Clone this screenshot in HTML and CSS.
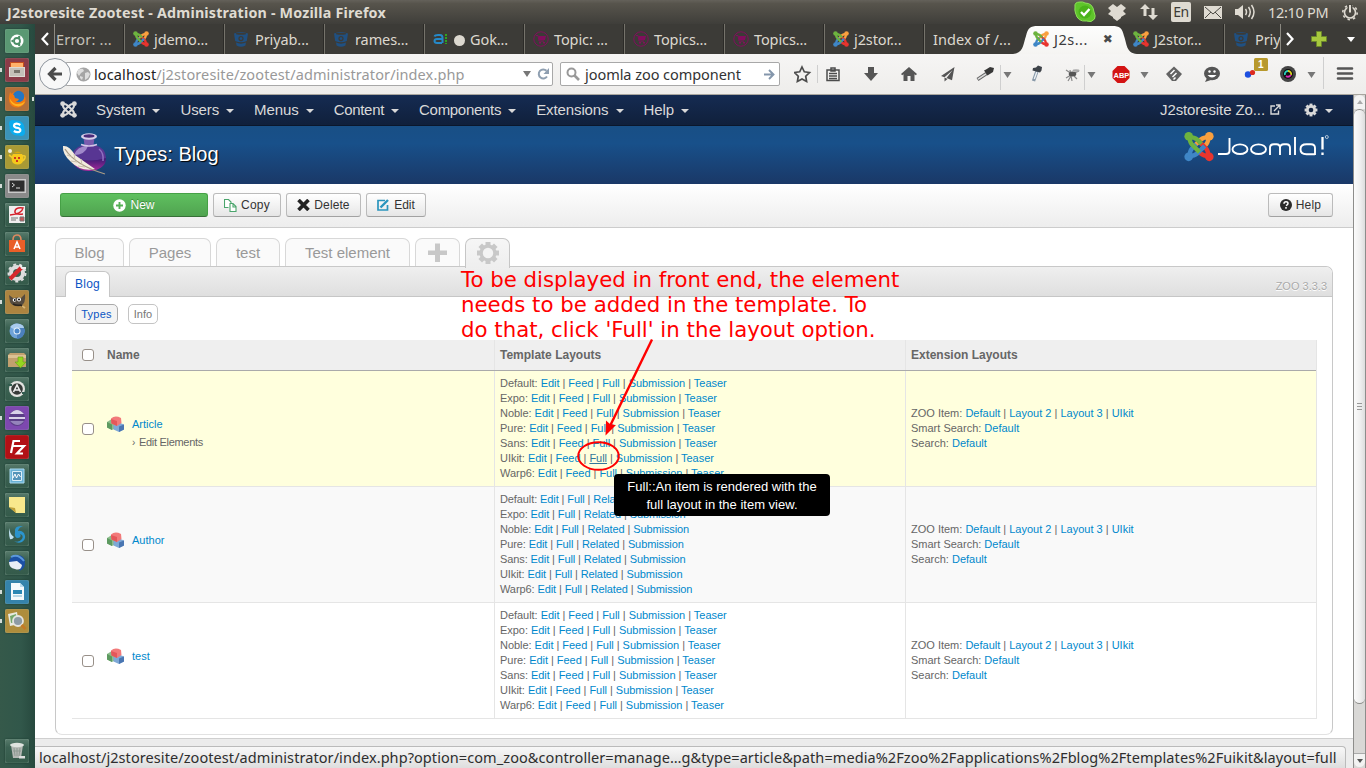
FILE: index.html
```html
<!DOCTYPE html>
<html lang="en">
<head>
<meta charset="utf-8">
<title>J2storesite Zootest - Administration</title>
<link rel="stylesheet" href="styles.css">
</head>
<body>
<svg class="defs" width="0" height="0">
  <defs>
    <linearGradient id="ink" x1="0" y1="0" x2="0" y2="1"><stop offset="0" stop-color="#7a5bb0"/><stop offset=".5" stop-color="#3f1c75"/><stop offset="1" stop-color="#a82a9b"/></linearGradient>
    <linearGradient id="tabfill" x1="0" y1="0" x2="0" y2="1"><stop offset="0" stop-color="#fdfdfc"/><stop offset="1" stop-color="#f5f4f2"/></linearGradient>
    <g id="arm"><circle cx="5" cy="5" r="4.6"/><path d="M18.5 13 L14 8.500 Q11 6 6 6 Q6 11 8.500 14 L16.500 22" fill="none" stroke-width="4.600"/></g>
    <symbol id="joomla" viewBox="0 0 32 32">
      <use href="#arm" fill="#f9a03f" stroke="#f9a03f" stroke-width="0" transform="rotate(90 16 16)"/>
      <use href="#arm" fill="#e8352e" stroke="#e8352e" stroke-width="0" transform="rotate(180 16 16)"/>
      <use href="#arm" fill="#3f86c6" stroke="#3f86c6" stroke-width="0" transform="rotate(270 16 16)"/>
      <use href="#arm" fill="#6db33f" stroke="#6db33f" stroke-width="0"/>
    </symbol>
    <symbol id="joomla-mono" viewBox="0 0 32 32">
      <g fill="#d9d9d9" stroke="#d9d9d9" stroke-width="0"><circle cx="5" cy="5" r="4.600"/><circle cx="27" cy="5" r="4.600"/><circle cx="5" cy="27" r="4.600"/><circle cx="27" cy="27" r="4.600"/></g>
      <path d="M5 5Q12 5 16 10L22 16M27 5Q27 12 22 16L16 22M27 27Q20 27 16 22L10 16M5 27Q5 20 10 16L16 10M5 5Q5 12 10 16M27 5Q20 5 16 10M27 27Q27 20 22 16M5 27Q12 27 16 22" fill="none" stroke="#d9d9d9" stroke-width="3.800"/>
    </symbol>
    <symbol id="bucket" viewBox="0 0 16 16"><path d="M1 2.500 Q8 -.5 15 2.500 L13.800 10 Q8 12.500 2.200 10Z M3 11.500 Q8 13.800 13 11.500 L12.400 14.500 Q8 17 3.600 14.500Z" fill="#205081"/><ellipse cx="8" cy="2.800" rx="5.200" ry="1" fill="#3c3b37"/><circle cx="8" cy="7.600" r="2.600" fill="#3c3b37"/><circle cx="8" cy="7.600" r="1.300" fill="#205081"/></symbol>
    <symbol id="cart" viewBox="0 0 16 16"><circle cx="8" cy="8" r="7.200" fill="none" stroke="#820e5d"/><path d="M3 4.500h2l1 5.500h5" fill="none" stroke="#820e5d" stroke-width="1"/><path d="M5.500 5h7.500l-1 4H6zM6 11h2v1.500h-2zM10 11h2v1.500h-2z" fill="#820e5d"/></symbol>
    <symbol id="blocks" viewBox="0 0 17 16"><path d="M0 6l4-2.500 5 2.500v6l-4 2-5-2.500z" fill="#8bbd8b"/><path d="M0 6l5 2.500v5.500l-5-2.500z" fill="#5d9a60"/><path d="M6.500 9l5.500-2.500 5 2v5l-5 2.500-5.500-2.500z" fill="#7ea8d6"/><path d="M12 10.500l5-2v5l-5 2.500z" fill="#4a76b2"/><path d="M4 2.500Q8-1 14 2l.5 5-4.500 3-5.500-2.500z" fill="#f27a7a"/><path d="M4 3l6 2v5l-5.500-2.500z" fill="#e4575a"/></symbol>
    <symbol id="gear" viewBox="-12 -12 24 24"><g fill="currentColor"><path d="M-2.500-11h5v22h-5z"/><path d="M-2.500-11h5v22h-5z" transform="rotate(45)"/><path d="M-2.500-11h5v22h-5z" transform="rotate(90)"/><path d="M-2.500-11h5v22h-5z" transform="rotate(135)"/><circle r="8.500"/></g></symbol>
  </defs>
</svg>

<header class="panel">
  <div class="panel-title">J2storesite Zootest - Administration - Mozilla Firefox</div>
  <div class="tray">
    <svg width="22" height="22" viewBox="0 0 22 22"><path d="M1 6Q0 1 6 1q3-.5 5 1 8 0 9 9 2 4 .500 7-3 4-8 2-9 1-11-8-1-3-.5-6z" fill="#5fc52b" stroke="#8ee05a"/><circle cx="11" cy="11" r="6.500" fill="#4ab31a"/><path d="M7 11l3 3 5.500-6" fill="none" stroke="#fff" stroke-width="2.400"/></svg>
    <svg class="m1" width="18" height="17" viewBox="0 0 18 17"><path d="M5 0l4 3 4-3 5 4-3 3 3 3-5 3v1l-4 3-4-3v-1l-5-3 3-3-3-3z" fill="#dfdbd2"/></svg>
    <svg class="m2" width="18" height="16" viewBox="0 0 18 16"><path d="M5 0l5 5H6.500v7h-3V5H0zM13 16l5-5h-3.500V4h-3v7H8z" fill="#dfdbd2"/></svg>
    <span class="lang">En</span>
    <svg class="m3" width="18" height="13" viewBox="0 0 18 13"><path d="M0 0h18v13H0z" fill="#dfdbd2"/><path d="M1 1l8 7 8-7M1 12l6-6M17 12l-6-6" fill="none" stroke="#4a4943"/></svg>
    <svg class="m4" width="20" height="16" viewBox="0 0 20 16"><path d="M0 5h3l5-4v14l-5-4H0z" fill="#dfdbd2"/><path d="M10.500 5q2 3 0 6M13.500 3q3.500 5 0 10M16.500 1q5 7 0 14" fill="none" stroke="#dfdbd2" stroke-width="1.500"/></svg>
    <span class="clock">12:10 PM</span>
    <svg width="16" height="17" viewBox="-8 -8.500 16 17"><circle r="5.500" fill="none" stroke="#dfdbd2" stroke-width="1.600"/><circle r="7.200" fill="none" stroke="#dfdbd2" stroke-width="1.600" stroke-dasharray="2.400 3.250"/><path d="M-2.500-8.500h5V-3h-5z" fill="#4b4942"/><path d="M0-7.500V0" stroke="#dfdbd2" stroke-width="2"/></svg>
  </div>
</header>

<div class="desktop">
<aside class="launcher">
  <div class="tile ubuntu"><svg viewBox="0 0 24 24"><circle cx="12" cy="12" r="6.500" fill="#fff"/><circle cx="12" cy="12" r="3" fill="none" stroke="#4d8f68" stroke-width="1.800"/><g fill="#4d8f68"><circle cx="7.500" cy="12" r="1.200"/><circle cx="14.200" cy="8" r="1.200"/><circle cx="14.200" cy="16" r="1.200"/></g></svg></div>
  <div class="tile files on"><svg viewBox="0 0 24 24"><path d="M5 4h14v6H5z" fill="#c74e1d"/><path d="M6 5h12v4H6z" fill="#ffb169"/><path d="M4 9h16v10H4z" fill="#ddd9d2"/><path d="M5 10h14v8H5z" fill="#c4c0b8"/><path d="M9 12h6v3H9z" fill="#77736b"/></svg></div>
  <div class="tile fox on cur"><svg viewBox="0 0 24 24"><circle cx="12.500" cy="12" r="7.800" fill="#f27a12"/><circle cx="13.500" cy="9.500" r="5.800" fill="#2476c4"/><path d="M5 5q2 3 4 3l1 3 4 1q-2 4-6 2 4 5 10 1 2-2 2-6 2 7-3 10-5 3-10 0-5-4-2-14z" fill="#f27a12"/><path d="M4.500 11q1 8 9 8.500 5-1 6.500-5-4 3-9 2.500-4-1-6.500-6z" fill="#ffb321"/></svg></div>
  <div class="tile skype on"><svg viewBox="0 0 24 24"><circle cx="12" cy="12" r="7.500" fill="#0bacee"/><circle cx="8" cy="8" r="4" fill="#0bacee"/><circle cx="16" cy="16" r="4" fill="#0bacee"/><path d="M15.300 9Q12 6.700 9.500 8.300q-1.500 2.200 1.500 3.300 5 .5 4.300 3.200-2 2.700-6.500.2" fill="none" stroke="#fff" stroke-width="2.200"/></svg></div>
  <div class="tile pot on"><svg viewBox="0 0 24 24"><path d="M8 9h9q3 4 0 9-4 3-9 0-3-5 0-9z" fill="#f6c91b"/><path d="M17 11q4-1 3 2t-4 3M8 13L4 10" fill="none" stroke="#f1cb2a" stroke-width="1.600"/><path d="M9 8q4-3 7 0z" fill="#d9a90d"/><path d="M9 12h2v2H9zM13 12h2v2h-2zM11 15h2v2h-2z" fill="#d0361c"/><circle cx="5" cy="6" r="2" fill="#f4f2e0"/></svg></div>
  <div class="tile term on"><svg viewBox="0 0 24 24"><path d="M3 5h18v14H3z" fill="#c9c9c9"/><path d="M4.500 6.500h15v11h-15z" fill="#2d2d2d"/><path d="M7 9l2.500 2L7 13M11 14h4" fill="none" stroke="#ddd"/></svg></div>
  <div class="tile"><svg viewBox="0 0 24 24"><path d="M4 3h16v17H4z" fill="#eee"/><path d="M5 12q12-1 13-7-7-1-8 3t8 3" fill="none" stroke="#d5202b" stroke-width="1.500"/><path d="M6 15h7M6 17h5M15 14h4v4h-4z" stroke="#777" fill="#ca5656"/></svg></div>
  <div class="tile"><svg viewBox="0 0 24 24"><path d="M4 8h16v12H4z" fill="#e95f28"/><path d="M8 8q0-5 4-5t4 5" fill="none" stroke="#e0895f" stroke-width="1.600"/><path d="M9 17l3-7 3 7M10 15h4" fill="none" stroke="#fff" stroke-width="1.500"/></svg></div>
  <div class="tile"><svg viewBox="0 0 24 24"><circle cx="12" cy="12" r="6" fill="none" stroke="#ddd" stroke-width="4" /><circle cx="12" cy="12" r="8.500" fill="none" stroke="#ddd" stroke-width="2" stroke-dasharray="3 3"/><path d="M5 18L17 6" stroke="#d5282c" stroke-width="4"/><path d="M15 4l2 3 4 0" fill="none" stroke="#eee" stroke-width="2"/></svg></div>
  <div class="tile gimp on"><svg viewBox="0 0 24 24"><path d="M4 5l4 3q6-1 8 0l4-4q1 9-4 12-9 1-11-4z" fill="#544b3f"/><circle cx="9.500" cy="10" r="1.800" fill="#fff"/><circle cx="14" cy="9.500" r="2" fill="#fff"/><circle cx="9.800" cy="10" r=".9"/><circle cx="14" cy="9.500" r="1"/><path d="M8 14q4 2 8 1l2 2" fill="none" stroke="#29241e" stroke-width="1.500"/><path d="M17 16l3 2" stroke="#d8b46f" stroke-width="2"/></svg></div>
  <div class="tile"><svg viewBox="0 0 24 24"><circle cx="12" cy="12" r="7.500" fill="#6fa3d8"/><path d="M12 12L5 8q4-5 10-3 4 1 4 4z" fill="#a9cbee"/><path d="M12 12v8q7-1 8-8 0-2-1-3h-7z" fill="#4b80bd"/><circle cx="12" cy="12" r="3.500" fill="#e6f1fb"/><circle cx="12" cy="12" r="2.500" fill="#4c88c9"/></svg></div>
  <div class="tile"><svg viewBox="0 0 24 24"><path d="M3 7l2-2h14l2 2v12H3z" fill="#c2a06f"/><path d="M3 7h18v3H3z" fill="#dcc193"/><path d="M13 9h5v5h3l-5.500 6L10 14h3z" fill="#95d620" stroke="#619d13" stroke-width=".6"/></svg></div>
  <div class="tile"><svg viewBox="0 0 24 24"><circle cx="12" cy="12" r="8" fill="#e3e3e0"/><circle cx="12" cy="12" r="5.800" fill="#373a38"/><path d="M8.500 15l3.500-7 3.500 7M10 13h4" fill="none" stroke="#eee" stroke-width="1.600"/><path d="M3 8l4 0M17 16h4" stroke="#315c4e" stroke-width="2"/></svg></div>
  <div class="tile eclipse on"><svg viewBox="0 0 24 24"><circle cx="12" cy="12" r="8" fill="#5b3e87"/><path d="M5 8q7-8 14 0zM4 11h16v2H4z" fill="#d9d0e8"/><path d="M5 15h14q-6 8-14 0z" fill="#9583bb"/></svg></div>
  <div class="tile fz"><svg viewBox="0 0 24 24"><path d="M6 18L8.500 6H15M7.500 11h5M12.500 11H19l-7 7.500h6" fill="none" stroke="#fff" stroke-width="2.200"/></svg></div>
  <div class="tile"><svg viewBox="0 0 24 24"><path d="M5 5h14v14H5z" fill="#69b1d5" stroke="#a9d9ef"/><path d="M7.500 7.500h9v9h-9z" fill="#5594b9" stroke="#dceff8"/><path d="M8 14l2-4 1.500 4 2-4 2 3" fill="none" stroke="#fff"/></svg></div>
  <div class="tile"><svg viewBox="0 0 24 24"><path d="M4 4h16v16h-9l-7-6z" fill="#f8e88c"/><path d="M4 14l6 1 1 5z" fill="#bd9f38"/></svg></div>
  <div class="tile"><svg viewBox="0 0 24 24"><path d="M5 6q-1 6 4 9-2 3-4 2-2-6 0-11z" fill="#bfe0ef"/><path d="M18 4q-9-1-8 6-1 6 3 6 4-1 2-4 4 1 2 5-3 4-8 2 4 3 8 1 5-3 2-9-3-3-6-2 1-4 5-5z" fill="#2b94cc"/></svg></div>
  <div class="tile"><svg viewBox="0 0 24 24"><path d="M4 12q0-7 8-8 8 0 8 8 0 6-6 8 3-5-2-8z" fill="#1b50a5"/><path d="M6 6q7-4 13 4" fill="none" stroke="#5b98db" stroke-width="2"/><path d="M4 11l8-1 5 4q-1 6-7 4-6-1-6-7z" fill="#e8eef5"/></svg></div>
  <div class="tile writer on"><svg viewBox="0 0 24 24"><path d="M6 3h9l4 4v13H6z" fill="#f6fafc"/><path d="M15 3v4h4z" fill="#b9dcef"/><path d="M8 10h9v4H8z" fill="#2b87b4"/><path d="M8 16h9" stroke="#79b4d1"/></svg></div>
  <div class="tile viewer on"><svg viewBox="0 0 24 24"><path d="M3 5l9-2 2 12-9 2z" fill="#e8eadf"/><path d="M5 7l6-2 1 8-6 1z" fill="#75a86b"/><circle cx="13" cy="12" r="5" fill="#8d9ba5" stroke="#e5e5e0" stroke-width="1.800"/><path d="M16.500 16l4 4" stroke="#c57924" stroke-width="2.600"/></svg></div>
  <div class="tile trash"><svg viewBox="0 0 24 24"><path d="M6 6h12l-2 13H8z" fill="#b4b8b4"/><ellipse cx="12" cy="6" rx="7" ry="2.200" fill="#dfe3df"/><path d="M9 9l1 8M12 9v8M15 9l-1 8M8 12h8" stroke="#8d9a92"/><path d="M14 17h6v2.500h-6z" fill="#ddd"/></svg></div>
</aside>

<main class="browser">
  <div class="tabs">
    <div class="tab-scroll left"><svg width="8" height="14" viewBox="0 0 8 14"><path d="M7 1L1.500 7 7 13" fill="none" stroke="#fff" stroke-width="2.200"/></svg></div>
    <div class="tab-list">
      <div class="tab first">Error: ...</div>
      <div class="tab"><svg><use href="#joomla"/></svg>jdemo...</div>
      <div class="tab"><svg><use href="#bucket"/></svg><span class="gap">Priyab...</span></div>
      <div class="tab"><svg><use href="#bucket"/></svg><span class="gap">rames...</span></div>
      <div class="tab"><svg viewBox="0 0 16 16"><path d="M1.500 5.500Q2 4 5 4h2q2.500 0 2.500 3v5M9 8H4Q1.500 8 1.500 10t2.500 2h5" fill="none" stroke="#2589c8" stroke-width="2"/><path d="M13 3v10" stroke="#2fa51e" stroke-width="2" stroke-dasharray="2 1"/></svg><i class="dot"></i>Gok...</div>
      <div class="tab"><svg><use href="#cart"/></svg>Topic: ...</div>
      <div class="tab"><svg><use href="#cart"/></svg>Topics...</div>
      <div class="tab"><svg><use href="#cart"/></svg>Topics...</div>
      <div class="tab"><svg><use href="#joomla"/></svg>j2stor...</div>
      <div class="tab wide">Index of /...</div>
      <div class="tab active"><svg class="shape" viewBox="0 0 124 30"><path d="M0 30C11 29 10 20 13 12 15 4 17 2 25 2H99C107 2 109 4 111 12 114 20 113 29 124 30Z" fill="url(#tabfill)"/></svg><svg><use href="#joomla"/></svg>J2s...<b class="close">✖</b></div>
      <div class="tab"><svg><use href="#joomla"/></svg>J2stor...</div>
      <div class="tab last"><svg><use href="#bucket"/></svg><span class="gap">Priy</span></div>
    </div>
    <div class="tab-scroll right">
      <svg width="8" height="14" viewBox="0 0 8 14"><path d="M1 1L6.500 7 1 13" fill="none" stroke="#fff" stroke-width="2.200"/></svg>
      <svg class="plus" width="16" height="16" viewBox="0 0 16 16"><path d="M5.500.5h5v5h5v5h-5v5h-5v-5h-5v-5h5z" fill="#a7c83e" stroke="#6b872a"/></svg>
      <svg class="down" width="8" height="5" viewBox="0 0 8 5"><path d="M0 0h8L4 5z" fill="#fff"/></svg>
    </div>
  </div>

  <div class="navbar">
    <div class="back"><svg width="16" height="16" viewBox="0 0 16 16"><path d="M15 8H3M8.500 2L2.500 8l6 6" fill="none" stroke="#4c4c4c" stroke-width="3.200"/></svg></div>
    <div class="url">
      <svg width="15" height="15" viewBox="0 0 15 15"><circle cx="7.500" cy="7.500" r="7" fill="#a5a5a5"/><path d="M2 3q3-2 5-1l1 2-3 2-2 3-2-3zM9 6l3-1 2 2-2 4-3 2v-4zM4 9l3 1-1 3-2-2z" fill="#dedede"/></svg>
      <span class="addr"><b>localhost</b>/j2storesite/zootest/administrator/index.php</span>
      <svg class="drop" width="8" height="6" viewBox="0 0 8 6"><path d="M0 0h8L4 6z" fill="#777"/></svg>
      <svg class="reload" width="13" height="12" viewBox="0 0 13 12"><path d="M10 8.500A4.500 4.500 0 1 1 9.500 2.800" fill="none" stroke="#8f9fb1" stroke-width="2"/><path d="M12 0v6H6.500z" fill="#8f9fb1"/></svg>
    </div>
    <div class="search">
      <svg width="14" height="14" viewBox="0 0 14 14"><circle cx="5.500" cy="5.500" r="4" fill="none" stroke="#999" stroke-width="2"/><path d="M8.500 8.500l4.500 4.500" stroke="#999" stroke-width="2.600"/></svg>
      <span class="query">joomla zoo component</span>
      <svg class="go" width="11" height="11" viewBox="0 0 11 11"><path d="M0 5.500h9M5 1l4.500 4.500L5 10" fill="none" stroke="#8496ab" stroke-width="1.900"/></svg>
    </div>
    <svg class="tools" width="572" height="40" viewBox="794 54 572 40">
      <path d="M802 67l2.300 4.800 5.200.7-3.800 3.700.9 5.200-4.600-2.500-4.600 2.500.9-5.200-3.800-3.700 5.200-.7z" fill="none" stroke="#4c4c4c" stroke-width="1.700"/>
      <path d="M817.500 65v18M1000.500 65v25M1084.500 65v25M1323.500 57v32" stroke="#cfcfcf"/>
      <path d="M827 70h12v10.500h-12zM831 68h4v3h-4zM829 73.500h8M829 76h8M829 78.500h8" fill="none" stroke="#4c4c4c" stroke-width="1.500"/>
      <path d="M868 67h6v6h4l-7 8-7-8h4z" fill="#555"/>
      <path d="M909 67l8 7-1.200 1.200-1.300-1v6.800h-4v-5h-3v5h-4v-6.800l-1.300 1-1.200-1.200z" fill="#555"/>
      <path d="M954.500 67l-13.500 9 3.500 1.200 8-7-6 7.800 5.500 2.200zM944.500 77.500v4l3-2.500z" fill="#555"/>
      <path d="M977.500 79.500l9-6" stroke="#666" stroke-width="3.400"/><path d="M978 79.200l8-5.400" stroke="#ddd" stroke-width="1.600"/><path d="M984 70.500l3.500 5 1.500-1 4-2.500 1-4-4-1-4 2.500z" fill="#383838"/>
      <path d="M1033.500 81l3.500-10" stroke="#8798a8" stroke-width="3.400"/><path d="M1034.300 79l2.500-7" stroke="#eef2f5" stroke-width="1.400"/><path d="M1033 68l3-.5 2-2 4 1.500-.5 3.500-1.500 2-7.500-2z" fill="#3d4248"/>
      <path d="M1066 70l6 4 7-3M1066 78l5-3M1070 70l2 11M1068 81l3-5M1077 79l-3-3" fill="none" stroke="#888" stroke-width="1.200"/><ellipse cx="1072.500" cy="74" rx="3.800" ry="2.500" fill="#555"/><ellipse cx="1076" cy="70.500" rx="3.500" ry="1.300" fill="#aaa"/>
      <path d="M1117.500 66h7l5 5v7l-5 5h-7l-5-5v-7z" fill="#d31313"/>
      <text x="1113.500" y="77.500" class="abp">ABP</text>
      <g fill="#777"><path d="M1003.500 72h8l-4 6zM1087.500 72h8l-4 6zM1140.500 72h8l-4 6zM1307.500 72h8l-4 6z"/></g>
      <path d="M1174 66.500l8 7.500-6 7h-4l-6-7z" fill="#636363"/><path d="M1170.500 74l4-4M1172.500 77l4-4M1173.500 79.500l2-2" stroke="#fff" stroke-width="1.500"/>
      <ellipse cx="1212" cy="73.500" rx="8" ry="6.800" fill="#555"/><path d="M1207 78l-2 4 6-2z" fill="#555"/><path d="M1207.500 75q4.500 5 9 0z" fill="#fff"/><circle cx="1209.500" cy="71.500" r="1.200" fill="#fff"/><circle cx="1214.500" cy="71.500" r="1.200" fill="#fff"/>
      <circle cx="1248" cy="74.500" r="3.200" fill="#1c4fe0"/><circle cx="1252.500" cy="72.500" r="2.600" fill="#dd2b20"/>
      <rect x="1254" y="58" width="14" height="13" rx="1.500" fill="#b8992c"/><text x="1258" y="68" class="badge">1</text>
      <circle cx="1288" cy="74" r="8" fill="#444"/><circle cx="1288" cy="74" r="5" fill="#111"/><g fill="none" stroke-width="1.800"><path d="M1285 75a3 3 0 0 1 3-4" stroke="#2ad3c0"/><path d="M1288 71a3 3 0 0 1 3 4" stroke="#d8d420"/><path d="M1286 76q2.500 2 5-1" stroke="#df2ab9"/></g>
      <path d="M1338 68.500h14M1338 73.500h14M1338 78.500h14" stroke="#555" stroke-width="2.600" stroke-linecap="round"/>
    </svg>
  </div>

  <div class="viewport">
    <div class="page">
      <nav class="admin-nav">
        <svg class="jm" width="17" height="17"><use href="#joomla-mono"/></svg>
        <a>System</a><a>Users</a><a>Menus</a><a class="tight">Content</a><a class="tight">Components</a><a>Extensions</a><a>Help</a>
        <span class="site">J2storesite Zo...</span>
        <svg class="ext" width="11" height="11" viewBox="0 0 11 11"><path d="M5 2H1v8h7.500V6.500M4 7l6-6M6 1h4v4" fill="none" stroke="#d9d9d9" stroke-width="1.400"/></svg>
        <svg class="cog" width="14" height="14"><use href="#gear"/><circle cx="7" cy="7" r="2.300" fill="#12233f"/></svg><i class="caret"></i>
      </nav>
      <div class="title-bar">
        <svg class="inkpot" width="48" height="48" viewBox="0 0 48 48"><ellipse cx="28" cy="28" rx="17" ry="12" fill="url(#ink)"/><path d="M11 27q0-10 11-13h12q11 3 11 13-17 5-34 0z" fill="#583693"/><path d="M13 24q3-9 14-9-3 9-14 9z" fill="#a088ca"/><path d="M38 18q5 4 4 12" fill="none" stroke="#8f6fc0" stroke-width="1.500"/><path d="M22.500 7h11l-1 7H23.500z" fill="#7a5cae"/><ellipse cx="28" cy="5.500" rx="8" ry="3.200" fill="#d8cfe9"/><ellipse cx="28" cy="5" rx="5.500" ry="1.700" fill="#4b2a7a"/><path d="M20 13.500q8 3 16 0" stroke="#d4c6e8" stroke-width="1.500" fill="none"/><path d="M2 15q6-1 12 9 7 5 20 14-14 3-24-7Q1 23 2 15z" fill="#f3ecdf"/><path d="M4 18q10 16 40 25" fill="none" stroke="#a89a85" stroke-width="1.300"/><path d="M6 24l5 2M10 30l6 1M17 35l7 1M13 23l1 6M20 28l1 6" stroke="#cabfab"/></svg>
        <h1>Types: Blog</h1>
        <div class="brand"><svg width="30" height="31"><use href="#joomla"/></svg>
        <svg width="112" height="26" viewBox="0 0 112 26"><g fill="none" stroke="#fff" stroke-width="1.900"><path d="M12.500 4v13q0 3-3.500 3H1"/><ellipse cx="23" cy="15.200" rx="7.500" ry="4.800"/><ellipse cx="41.500" cy="15.200" rx="7.500" ry="4.800"/><path d="M53 21v-7q0-3.800 4-3.800h2.500q3.500 0 3.500 3.800v7M63 14q0-3.800 4-3.800h2.500q3.500 0 3.500 3.800v7M78 3v18M98 21v-7q0-3.800-4-3.800h-4.500q-6 0-6 5t6 5H98"/><path d="M105.500 3v12.500M105.500 18.500v2.500" stroke-width="2.300"/></g><circle cx="109.800" cy="3" r="1.500" fill="none" stroke="#d7e1ec" stroke-width=".8"/></svg></div>
      </div>
      <div class="toolbar">
        <button class="btn new"><svg width="13" height="13" viewBox="0 0 13 13"><circle cx="6.500" cy="6.500" r="6.200" fill="#fff"/><path d="M6.500 3v7M3 6.500h7" stroke="#55b055" stroke-width="1.900"/></svg>New</button>
        <button class="btn copy"><svg width="13" height="13" viewBox="0 0 13 13"><path d="M4.500 8.500h-4v-8h4l2.500 2.500v1M6 4.500h3l3 3v5H6z M9 4.500V8h3" fill="#fff" stroke="#4aa56c" stroke-width="1.100"/></svg>Copy</button>
        <button class="btn del"><svg width="13" height="12" viewBox="0 0 13 12"><path d="M1.500 1l10 10M11.500 1l-10 10" stroke="#222" stroke-width="3.600"/></svg>Delete</button>
        <button class="btn edit"><svg width="12" height="12" viewBox="0 0 12 12"><path d="M8 1.500H1v9.500h9.500V6" fill="none" stroke="#2b95bd" stroke-width="1.700"/><path d="M3.500 8.500L11 1" stroke="#2b95bd" stroke-width="2.400"/></svg>Edit</button>
        <button class="btn help"><svg width="12" height="12" viewBox="0 0 12 12"><circle cx="6" cy="6" r="6" fill="#2b2b2b"/><path d="M4 4.700q0-2 2-2t2 1.700q0 1-2 2.200M6 8v1.700" fill="none" stroke="#fff" stroke-width="1.500"/></svg>Help</button>
      </div>
      <div class="content">
        <div class="zoo-tabs">
          <div class="zt w1">Blog</div><div class="zt w2">Pages</div><div class="zt w3">test</div><div class="zt w4">Test element</div>
          <div class="zt w5"><svg width="20" height="20"><path d="M7 .500h5v7h7v4.500h-7v7h-5v-7h-7V7.500h7z" fill="#c8c8c8"/></svg></div>
          <div class="zt w5 sel"><svg width="24" height="24"><use href="#gear"/><circle cx="12" cy="12" r="5.200" fill="#f3f3f3"/></svg></div>
        </div>
        <section class="box">
          <div class="box-head"><div class="sub-tab">Blog</div><div class="version">ZOO 3.3.3</div></div>
          <div class="pills"><span class="pill on">Types</span><span class="pill">Info</span></div>
          <div class="table">
            <div class="row head"><div class="c1"><i class="check"></i>Name</div><div class="c2">Template Layouts</div><div class="c3">Extension Layouts</div></div>
            <div class="row hover">
              <div class="c1"><i class="check"></i><div class="name"><svg><use href="#blocks"/></svg><div><a>Article</a><p><span class="arrow">›</span>Edit Elements</p></div></div></div>
              <div class="c2">
                <p>Default: <a>Edit</a> | <a>Feed</a> | <a>Full</a> | <a>Submission</a> | <a>Teaser</a></p>
                <p>Expo: <a>Edit</a> | <a>Feed</a> | <a>Full</a> | <a>Submission</a> | <a>Teaser</a></p>
                <p>Noble: <a>Edit</a> | <a>Feed</a> | <a>Full</a> | <a>Submission</a> | <a>Teaser</a></p>
                <p>Pure: <a>Edit</a> | <a>Feed</a> | <a>Full</a> | <a>Submission</a> | <a>Teaser</a></p>
                <p>Sans: <a>Edit</a> | <a>Feed</a> | <a>Full</a> | <a>Submission</a> | <a>Teaser</a></p>
                <p>UIkit: <a>Edit</a> | <a>Feed</a> | <a class="hov">Full</a> | <a>Submission</a> | <a>Teaser</a></p>
                <p>Warp6: <a>Edit</a> | <a>Feed</a> | <a>Full</a> | <a>Submission</a> | <a>Teaser</a></p>
              </div>
              <div class="c3"><p>ZOO Item: <a>Default</a> | <a>Layout 2</a> | <a>Layout 3</a> | <a>UIkit</a></p><p>Smart Search: <a>Default</a></p><p>Search: <a>Default</a></p></div>
            </div>
            <div class="row odd">
              <div class="c1"><i class="check"></i><div class="name"><svg><use href="#blocks"/></svg><div><a>Author</a></div></div></div>
              <div class="c2">
                <p>Default: <a>Edit</a> | <a>Full</a> | <a>Related</a> | <a>Submission</a></p>
                <p>Expo: <a>Edit</a> | <a>Full</a> | <a>Related</a> | <a>Submission</a></p>
                <p>Noble: <a>Edit</a> | <a>Full</a> | <a>Related</a> | <a>Submission</a></p>
                <p>Pure: <a>Edit</a> | <a>Full</a> | <a>Related</a> | <a>Submission</a></p>
                <p>Sans: <a>Edit</a> | <a>Full</a> | <a>Related</a> | <a>Submission</a></p>
                <p>UIkit: <a>Edit</a> | <a>Full</a> | <a>Related</a> | <a>Submission</a></p>
                <p>Warp6: <a>Edit</a> | <a>Full</a> | <a>Related</a> | <a>Submission</a></p>
              </div>
              <div class="c3"><p>ZOO Item: <a>Default</a> | <a>Layout 2</a> | <a>Layout 3</a> | <a>UIkit</a></p><p>Smart Search: <a>Default</a></p><p>Search: <a>Default</a></p></div>
            </div>
            <div class="row">
              <div class="c1"><i class="check"></i><div class="name"><svg><use href="#blocks"/></svg><div><a>test</a></div></div></div>
              <div class="c2">
                <p>Default: <a>Edit</a> | <a>Feed</a> | <a>Full</a> | <a>Submission</a> | <a>Teaser</a></p>
                <p>Expo: <a>Edit</a> | <a>Feed</a> | <a>Full</a> | <a>Submission</a> | <a>Teaser</a></p>
                <p>Noble: <a>Edit</a> | <a>Feed</a> | <a>Full</a> | <a>Submission</a> | <a>Teaser</a></p>
                <p>Pure: <a>Edit</a> | <a>Feed</a> | <a>Full</a> | <a>Submission</a> | <a>Teaser</a></p>
                <p>Sans: <a>Edit</a> | <a>Feed</a> | <a>Full</a> | <a>Submission</a> | <a>Teaser</a></p>
                <p>UIkit: <a>Edit</a> | <a>Feed</a> | <a>Full</a> | <a>Submission</a> | <a>Teaser</a></p>
                <p>Warp6: <a>Edit</a> | <a>Feed</a> | <a>Full</a> | <a>Submission</a> | <a>Teaser</a></p>
              </div>
              <div class="c3"><p>ZOO Item: <a>Default</a> | <a>Layout 2</a> | <a>Layout 3</a> | <a>UIkit</a></p><p>Smart Search: <a>Default</a></p><p>Search: <a>Default</a></p></div>
            </div>
          </div>
        </section>
      </div>
      <div class="page-foot"></div>
    </div>
    <div class="scrollbar"><div class="sb-btn"><svg width="6" height="4"><path d="M0 4h6L3 0z" fill="#aaa"/></svg></div><div class="thumb"><i></i></div><div class="sb-track"></div><div class="sb-btn end"><svg width="6" height="4"><path d="M0 0h6L3 4z" fill="#555"/></svg></div></div>
  </div>
</main>
</div>

<div class="status"><span>localhost/j2storesite/zootest/administrator/index.php?option=com_zoo&amp;controller=manage…g&amp;type=article&amp;path=media%2Fzoo%2Fapplications%2Fblog%2Ftemplates%2Fuikit&amp;layout=full</span></div>
<div class="tooltip">Full::An item is rendered with the full layout in the item view.</div>
<div class="note">To be displayed in front end, the element<br>needs to be added in the template. To<br>do that, click 'Full' in the layout option.</div>
<svg class="marks" width="90" height="140" viewBox="570 335 90 140"><path d="M652 339.500L610 426" stroke="#f00" stroke-width="2.400"/><path d="M605.500 435.500l.5-15 4.500 4 5.500.500z" fill="#f00"/><ellipse cx="598.500" cy="456" rx="20.300" ry="13.800" fill="none" stroke="#f00" stroke-width="2"/></svg>
</body>
</html>
```
FILE: styles.css
```css
* { box-sizing: border-box; }
body { margin: 0; width: 1366px; height: 768px; overflow: hidden; position: relative; font-family: "Liberation Sans", Arial, sans-serif; background: #fff; }
p, h1 { margin: 0; font-weight: normal; }
svg { flex: none; }
.defs { position: absolute; }

.panel { height: 24px; display: flex; align-items: center; justify-content: space-between; padding: 0 8px 0 7px; background: linear-gradient(#64615a, #57544c 15%, #3f3e3a); color: #dfdbd2; font-family: "Noto Sans", sans-serif; }
.panel-title { font-size: 14.300px; font-weight: 700; white-space: nowrap; letter-spacing: .18px; }
.tray { display: flex; align-items: center; }
.m1 { margin-left: 12px; }
.m2 { margin-left: 14px; }
.lang { margin-left: 13px; width: 20px; height: 20px; border-radius: 2px; background: #dfdbd2; color: #3c3b37; font-size: 14px; line-height: 20px; text-align: center; letter-spacing: -.5px; }
.m3 { margin-left: 13px; }
.m4 { margin-left: 13px; }
.clock { margin: 0 14px 0 13px; font-size: 14.500px; width: 60px; white-space: nowrap; letter-spacing: -.3px; }

.desktop { display: flex; height: 744px; }
.launcher { width: 35px; display: flex; flex-direction: column; gap: 5px; padding: 5px 0 5px 5px; background: linear-gradient(90deg, #35594a, #31574a 60%, #27493e); }
.tile { position: relative; width: 24px; height: 24px; border-radius: 2px; background: linear-gradient(#587b6c, #3c6253 35%, #345a4a); box-shadow: inset 0 0 1px #b5cabf, 0 0 2px #18382c; flex: none; }
.tile svg { width: 24px; height: 24px; display: block; }
.ubuntu { background: #5a9873; }
.files { background: #8b3b48; }
.fox { background: #b4703a; }
.skype { background: #3b93b8; }
.pot { background: #a99a35; }
.term { background: #8a8a8a; }
.gimp { background: #ac8440; }
.eclipse { background: #7d48af; }
.fz { background: #b21015; }
.writer { background: #3583ab; }
.viewer { background: #ae8d3c; }
.trash { margin-top: auto; }
.on::before, .cur::after { content: ""; position: absolute; left: -5px; top: 10px; width: 2px; height: 4px; background: #d5dcd8; }
.cur::after { left: 27px; }
.pill.on::before { display: none; }

.browser { width: 1331px; display: flex; flex-direction: column; }
.tabs { height: 30px; display: flex; background: #3c3b37; color: #dcd8cf; font: 14.500px/31px "Noto Sans", sans-serif; }
.tab-scroll { display: flex; align-items: center; }
.left { width: 20px; padding-left: 6px; border-right: 1px solid #8b8981; }
.right { width: 85px; padding-left: 5px; }
.plus { margin-left: 17px; }
.down { margin-left: 20px; }
.tab-list { width: 1226px; flex: none; display: flex; overflow: hidden; border-right: 1px solid #8b8981; }
.tab { position: relative; flex: none; width: 100px; display: flex; align-items: center; gap: 5px; padding-left: 8px; white-space: nowrap; border-right: 1px solid #75736b; box-shadow: inset -1px 0 #2b2a27; letter-spacing: -.1px; }
.tab svg { width: 16px; height: 16px; }
.tab.first { width: 70px; padding-left: 1px; color: #c4c0b8; letter-spacing: .2px; }
.tab .gap { margin-left: 1px; }
.dot { width: 11px; height: 11px; margin-top: 2px; border-radius: 50%; background: #dcd8cf; }
.tab.active { color: #3c3c3c; border-right-color: transparent; box-shadow: none; z-index: 1; letter-spacing: .5px; }
.tab.wide { border-right: 0; box-shadow: none; letter-spacing: .1px; }
.tab svg.shape { position: absolute; left: -12px; top: 0; width: 124px; height: 30px; z-index: -1; }
.close { margin-left: 10px; font: 12px "DejaVu Sans", sans-serif; color: #4a4a4a; }
.gap { overflow: hidden; }

.navbar { height: 41px; display: flex; align-items: center; background: linear-gradient(#f6f5f4, #eeedeb); border-bottom: 1px solid #a9a69f; color: #333; font-family: "Noto Sans", sans-serif; font-size: 14.500px; white-space: nowrap; }
.back { width: 32px; height: 32px; margin-left: 4px; border: 1px solid #8e959d; border-radius: 50%; background: #f8f8f8; display: flex; align-items: center; justify-content: center; z-index: 1; flex: none; }
.url { width: 488px; height: 24px; margin-left: -6px; padding-left: 10px; display: flex; align-items: center; background: #fff; border: 1px solid #a8a8a8; border-radius: 2px; flex: none; }
.addr { margin-left: 3px; width: 430px; color: #999; letter-spacing: .11px; }
.addr b { font-weight: 400; color: #222; }
.drop { margin-left: -1px; }
.reload { margin-left: 6px; }
.search { width: 220px; height: 24px; margin-left: 7px; padding-left: 5px; display: flex; align-items: center; background: #fff; border: 1px solid #a8a8a8; border-radius: 2px; flex: none; }
.query { margin-left: 5px; width: 179px; letter-spacing: -.05px; }
.tools { margin-left: 14px; }
.abp { font: 700 7.500px "Liberation Sans", sans-serif; fill: #fff; }
.badge { font: 700 10px "Liberation Sans", sans-serif; fill: #fff; }

.viewport { flex: 1; min-height: 0; display: flex; }
.page { width: 1318px; display: flex; flex-direction: column; }
.admin-nav { height: 31px; flex: none; display: flex; align-items: center; padding: 0 20px 1px 25px; background: linear-gradient(#152b52, #10203b); border-bottom: 1px solid #0b172b; color: #d9d9d9; font-size: 15px; line-height: 17px; white-space: nowrap; letter-spacing: -.1px; }
.jm { margin-right: 19px; }
.admin-nav a { display: flex; align-items: center; margin-right: 20px; }
.admin-nav a.tight { letter-spacing: -.3px; }
.admin-nav a::after, .caret { content: ""; margin-left: 7px; margin-top: 2px; border: 4px solid transparent; border-top-color: #d9d9d9; border-bottom: 0; }
.site { margin-left: auto; }
.ext { margin-left: 5px; }
.cog { margin-left: 23px; color: #d9d9d9; }
.title-bar { height: 58px; flex: none; display: flex; align-items: center; padding: 0 24px 0 26px; background: linear-gradient(#184f85, #18508a 30%, #1a3867); }
.inkpot { margin-top: -1px; }
.title-bar h1 { margin: -2px 0 0 5px; font-size: 20px; color: #fff; text-shadow: 1px 1px 1px #000; }
.brand { margin-left: auto; margin-top: -17px; display: flex; align-items: center; gap: 3px; }
.toolbar { height: 44px; flex: none; display: flex; gap: 5px; padding: 9px 20px 0 25px; background: linear-gradient(#fff, #ededed); border-bottom: 1px solid #ccc; }
.btn { height: 24px; padding: 0; display: flex; align-items: center; justify-content: center; gap: 4px; border: 1px solid #bbb; border-bottom-color: #a2a2a2; border-radius: 3px; background: linear-gradient(#fff, #e6e6e6); color: #333; font: 12px "Liberation Sans", sans-serif; }
.new { width: 148px; background: linear-gradient(#5fc05f, #50a350); border-color: #46a046 #46a046 #387038; color: #fff; text-shadow: 0 -1px #3d8b3d; }
.copy { width: 68px; letter-spacing: .2px; }
.del { width: 75px; letter-spacing: .1px; }
.edit { width: 60px; gap: 5px; }
.help { width: 65px; margin-left: auto; letter-spacing: .2px; }

.content { height: 507px; flex: none; padding: 10px 20px 0; }
.zoo-tabs { display: flex; gap: 5px; height: 28px; }
.zt { height: 28px; display: flex; align-items: center; justify-content: center; border: 1px solid #d8d8d8; border-bottom: 0; border-radius: 7px 7px 0 0; background: #fafafa; color: #999; font-size: 15px; padding-top: 0; }
.w1 { width: 69px; } .w2 { width: 82px; } .w3 { width: 64px; } .w4 { width: 125px; } .w5 { width: 45px; }
.zt.sel { height: 30px; border-color: #c6c6c6; background: linear-gradient(#f6f6f6, #eee); color: #c8c8c8; z-index: 1; padding-bottom: 2px; }
.box { height: 469px; border: 1px solid #c8c8c8; border-bottom-color: #e2e2e2; border-radius: 0 7px 7px 7px; }
.box-head { height: 30px; display: flex; justify-content: space-between; padding: 4px 5px 0 9px; border-bottom: 1px solid #c6c6c6; border-radius: 0 6px 0 0; background: linear-gradient(#efefef, #dfdfdf); }
.sub-tab { width: 45px; height: 26px; border: 1px solid #c6c6c6; border-bottom: 0; border-radius: 6px 6px 0 0; background: #fff; color: #0b55c4; font-size: 12px; line-height: 24px; text-align: center; letter-spacing: .2px; }
.version { font-size: 11px; line-height: 31px; color: #aaa; text-shadow: 0 1px #fff; }
.pills { display: flex; gap: 10px; padding: 7px 19px 0; height: 43px; }
.pill { height: 20px; width: 30px; border: 1px solid #c4c4c4; border-radius: 5px; color: #777; font-size: 11px; line-height: 19px; text-align: center; }
.pill.on { width: 43px; border-color: #aaa; background: #f3f3f3; color: #0b55c4; letter-spacing: .2px; }

.table { margin-left: 16px; width: 1245px; border-right: 1px solid #e5e5e5; color: #666; font-size: 11px; line-height: 15px; }
.row { display: grid; grid-template-columns: 423px 411px 1fr; height: 116px; border-bottom: 1px solid #e5e5e5; }
.row > div { display: flex; flex-direction: column; justify-content: center; border-right: 1px solid #e5e5e5; padding-left: 5px; }
.row > .c3 { border-right: 0; }
.row .c2 p { letter-spacing: -.035px; }
.row.odd .c2 p { letter-spacing: -.1px; }
.row > .c1 { flex-direction: row; justify-content: flex-start; align-items: center; padding-left: 10px; }
.row.head { height: 31px; background: #efefef; border-bottom-color: #aaa; font-size: 12px; font-weight: 700; }
.row.hover { background: #ffffdd; }
.row.odd { background: #f9f9f9; }
.row a { color: #0088cc; }
.row a.hov { color: #33779a; text-decoration: underline; }
.check { width: 12px; height: 12px; margin-right: 13px; border: 1px solid #989089; border-radius: 3px; background: #fff; flex: none; }
.name { display: flex; height: 36px; margin-top: 9px; gap: 8px; line-height: 18px; }
.name svg { width: 17px; height: 16px; margin-top: 1px; }
.name p { letter-spacing: -.3px; }
.arrow { display: inline-block; width: 7px; font-size: 10px; line-height: 10px; }
.page-foot { flex: 1; margin-top: 3px; border-top: 1px solid #cfcfcf; background: #ececec; }

.scrollbar { width: 13px; display: flex; flex-direction: column; background: #d9d8d6; border-left: 1px solid #8d8d8b; border-right: 1px solid #8d8d8b; }
.sb-btn { height: 14px; display: flex; align-items: center; justify-content: center; background: #f3f3f2; border-radius: 6px 6px 0 0; }
.sb-btn.end { border-radius: 0 0 6px 6px; border-top: 1px solid #aaa; margin-bottom: 1px; }
.thumb { height: 595px; border: 1px solid #8d8d8b; border-width: 1px 0; border-radius: 6px; background: linear-gradient(90deg, #fbfbfb, #eee 60%, #ddd); display: flex; align-items: center; justify-content: center; }
.thumb i { width: 5px; height: 7px; background: repeating-linear-gradient(#999 0 1px, transparent 1px 3px); }
.sb-track { flex: 1; }

.status { position: absolute; left: 35px; top: 746px; width: 1311px; height: 22px; padding-left: 4px; border: 1px solid #bbb; border-width: 1px 1px 0 0; border-radius: 0 4px 0 0; background: linear-gradient(#f8f8f8, #dedede); color: #2e2e2e; font: 14.500px/20px "Noto Sans", sans-serif; letter-spacing: .075px; white-space: nowrap; }
.tooltip { position: absolute; left: 614px; top: 474px; width: 216px; height: 42px; padding: 4px 8px 0; border-radius: 4px; background: #000; color: #fff; font-size: 13px; line-height: 18px; text-align: center; }
.note { position: absolute; left: 461px; top: 267px; color: #f00; font: 21.300px/25px "DejaVu Sans", sans-serif; white-space: nowrap; }
.marks { position: absolute; left: 570px; top: 335px; }
```
